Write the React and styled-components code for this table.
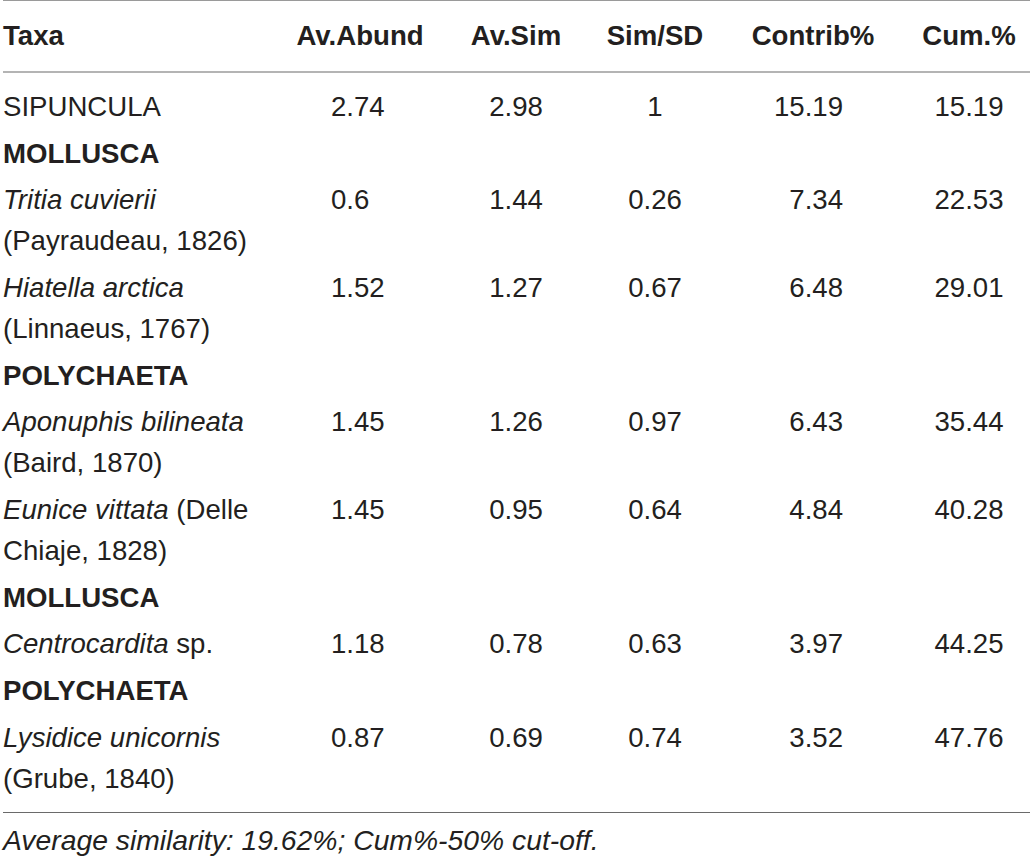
import React from "react";
import styled, { createGlobalStyle } from "styled-components";

const GlobalStyle = createGlobalStyle`
  html, body {
    margin: 0;
    padding: 0;
    background: #ffffff;
  }
  body {
    font-family: "Liberation Sans", Arial, sans-serif;
    color: #231f20;
  }
`;

const widths = [287, 140, 172, 106, 210, 112];

const columns = [
  { key: "abund", label: "Av.Abund", box: 58, align: "left" },
  { key: "sim", label: "Av.Sim", box: 58, align: "center" },
  { key: "simsd", label: "Sim/SD", box: 58, align: "center" },
  { key: "contrib", label: "Contrib%", box: 72, align: "right", shift: -6 },
  { key: "cum", label: "Cum.%", box: 72, align: "center", shift: -5 },
];

const rows = [
  { type: "taxon", name: [{ t: "SIPUNCULA" }], v: ["2.74", "2.98", "1", "15.19", "15.19"] },
  { type: "group", label: "MOLLUSCA" },
  { type: "taxon", name: [{ t: "Tritia cuvierii", i: true }, { t: " (Payraudeau, 1826)" }], v: ["0.6", "1.44", "0.26", "7.34", "22.53"] },
  { type: "taxon", name: [{ t: "Hiatella arctica", i: true }, { t: " (Linnaeus, 1767)" }], v: ["1.52", "1.27", "0.67", "6.48", "29.01"] },
  { type: "group", label: "POLYCHAETA" },
  { type: "taxon", name: [{ t: "Aponuphis bilineata", i: true }, { t: " (Baird, 1870)" }], v: ["1.45", "1.26", "0.97", "6.43", "35.44"] },
  { type: "taxon", name: [{ t: "Eunice vittata", i: true }, { t: " (Delle Chiaje, 1828)" }], v: ["1.45", "0.95", "0.64", "4.84", "40.28"] },
  { type: "group", label: "MOLLUSCA" },
  { type: "taxon", name: [{ t: "Centrocardita", i: true }, { t: " sp." }], v: ["1.18", "0.78", "0.63", "3.97", "44.25"] },
  { type: "group", label: "POLYCHAETA" },
  { type: "taxon", name: [{ t: "Lysidice unicornis", i: true }, { t: " (Grube, 1840)" }], v: ["0.87", "0.69", "0.74", "3.52", "47.76"] },
];

export default function App() {
  return (
    <>
      <GlobalStyle />
      <S.Wrap>
        <S.Table>
          <colgroup>
            {widths.map((w, i) => (
              <S.Col key={i} $width={w} />
            ))}
          </colgroup>
          <thead>
            <tr>
              <S.HeadCell $first>Taxa</S.HeadCell>
              {columns.map((c) => (
                <S.HeadCell key={c.key} $shift={c.key === "cum" ? -5 : 0}>
                  {c.label}
                </S.HeadCell>
              ))}
            </tr>
          </thead>
          <S.Body>
            {rows.map((r, idx) =>
              r.type === "group" ? (
                <tr key={idx}>
                  <S.Group colSpan={6}>{r.label}</S.Group>
                </tr>
              ) : (
                <tr key={idx}>
                  <S.NameCell>
                    {r.name.map((p, j) =>
                      p.i ? <em key={j}>{p.t}</em> : <span key={j}>{p.t}</span>
                    )}
                  </S.NameCell>
                  {r.v.map((val, j) => (
                    <S.NumCell key={j}>
                      <S.NumBox
                        $width={columns[j].box}
                        $align={columns[j].align}
                        $shift={columns[j].shift || 0}
                      >
                        {val}
                      </S.NumBox>
                    </S.NumCell>
                  ))}
                </tr>
              )
            )}
          </S.Body>
        </S.Table>
        <S.Note>Average similarity: 19.62%; Cum%-50% cut-off.</S.Note>
      </S.Wrap>
    </>
  );
}

/**
 * Style
 */

const S = {};

S.Wrap = styled.div`
  margin-left: 3px;
  width: 1027px;
  font-size: 27.6px;
`;

S.Table = styled.table`
  width: 100%;
  border-collapse: collapse;
  table-layout: fixed;
  border-top: 1px solid #9a9a9a;
  border-bottom: 1px solid #6a6a6a;
`;

S.Col = styled.col`
  width: ${({ $width }) => $width}px;
`;

S.HeadCell = styled.th`
  height: 70px;
  padding: 0;
  font-weight: 700;
  text-align: ${({ $first }) => ($first ? "left" : "center")};
  vertical-align: middle;
  border-bottom: 2px solid #b4b4b4;
  line-height: 1;
  position: relative;
  left: ${({ $shift }) => $shift || 0}px;
`;

S.Body = styled.tbody`
  &::before,
  &::after {
    content: "";
    display: table-row;
    height: 11px;
  }
`;

S.NameCell = styled.td`
  padding: 2.85px 30px 2.85px 0;
  line-height: 41px;
  vertical-align: top;

  em {
    font-style: italic;
  }
`;

S.NumCell = styled.td`
  padding: 2.85px 0;
  line-height: 41px;
  vertical-align: top;
  text-align: center;
`;

S.NumBox = styled.span`
  display: inline-block;
  width: ${({ $width }) => $width}px;
  text-align: ${({ $align }) => $align};
  position: relative;
  left: ${({ $shift }) => $shift}px;
`;

S.Group = styled.td`
  padding: 2.85px 0;
  line-height: 41px;
  font-weight: 700;
`;

S.Note = styled.div`
  padding-top: 9px;
  font-size: 28.3px;
  font-style: italic;
  line-height: 36px;
`;
